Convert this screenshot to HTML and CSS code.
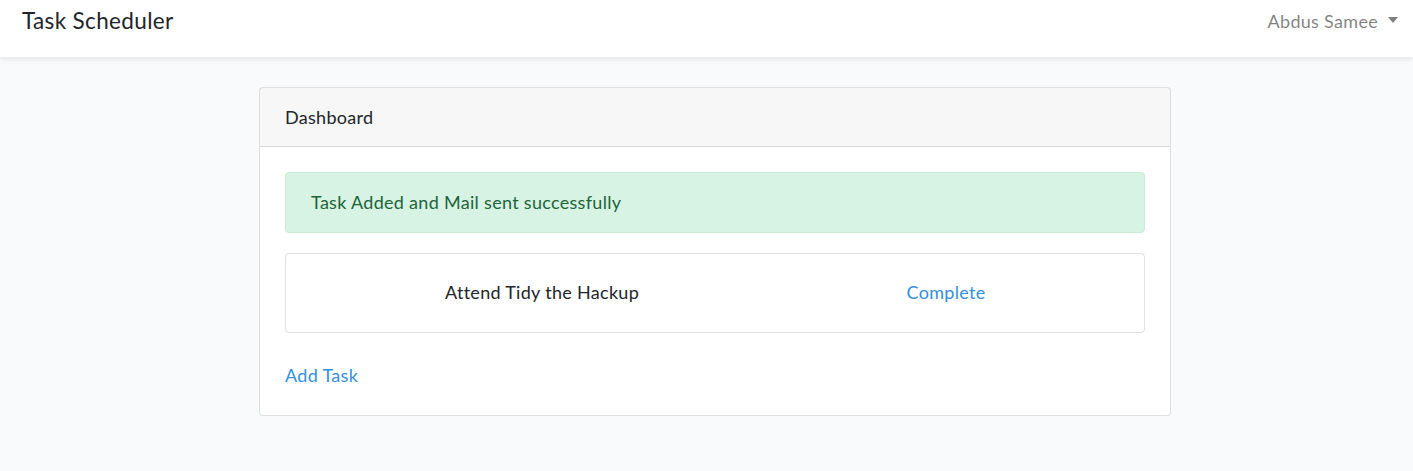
FILE: index.html
```html
<!DOCTYPE html>
<html lang="en">
<head>
<meta charset="utf-8">
<title>Task Scheduler</title>
<link rel="stylesheet" href="styles.css">
</head>
<body>
<header class="navbar">
  <a class="brand" href="#">Task Scheduler</a>
  <div class="user">
    <span class="user-name">Abdus Samee</span>
    <span class="caret"></span>
  </div>
</header>
<main class="main">
  <section class="card">
    <div class="card-header">Dashboard</div>
    <div class="card-body">
      <div class="alert">Task Added and Mail sent successfully</div>
      <div class="task">
        <span class="task-name">Attend Tidy the Hackup</span>
        <a class="task-action" href="#">Complete</a>
      </div>
      <a class="add-task" href="#">Add Task</a>
    </div>
  </section>
</main>
</body>
</html>
```
FILE: styles.css
```css
* { box-sizing: border-box; }
html, body { margin: 0; padding: 0; }
body {
  background: #f8fafc;
  font-family: "Lato", "Open Sans", sans-serif;
  font-size: 18px;
  line-height: 28.8px;
  letter-spacing: 0.3px;
  color: #212529;
  height: 471px;
  overflow: hidden;
}
a { text-decoration: none; color: #3490dc; }

.navbar {
  height: 57px;
  background: #fff;
  box-shadow: 0 2.5px 5px rgba(0,0,0,0.075);
  display: flex;
  justify-content: space-between;
  align-items: flex-start;
  padding: 3px 15px 0 22px;
  position: relative;
}
.brand {
  color: #212529;
  font-size: 22.5px;
  line-height: 36px;
  letter-spacing: 0.35px;
}
.user {
  display: flex;
  align-items: center;
  gap: 10px;
  color: rgba(0,0,0,0.5);
  margin-top: 3.6px;
}
.caret {
  width: 0; height: 0;
  border-left: 5.5px solid transparent;
  border-right: 5.5px solid transparent;
  border-top: 6px solid rgba(0,0,0,0.5);
  margin-top: -2px;
}

.main {
  padding-top: 30px;
  padding-left: 259px;
}
.card {
  width: 912px;
  background: #fff;
  border: 1px solid rgba(0,0,0,0.125);
  border-radius: 4px;
}
.card-header {
  background: rgba(0,0,0,0.03);
  border-bottom: 1px solid rgba(0,0,0,0.125);
  padding: 14.5px 25px 14.5px;
}
.card-body {
  padding: 25px 25px 26px;
}
.alert {
  background: #d7f3e3;
  border: 1px solid #c7eed8;
  color: #1d643b;
  border-radius: 4px;
  padding: 15px 25px;
  margin-bottom: 20px;
}
.task {
  border: 1px solid rgba(0,0,0,0.125);
  border-radius: 4px;
  height: 80px;
  display: grid;
  grid-template-columns: 404px 404px;
  align-items: center;
  justify-items: center;
  padding-left: 54px;
  overflow: hidden;
}
.add-task {
  display: inline-block;
  margin-top: 28px;
}
```
